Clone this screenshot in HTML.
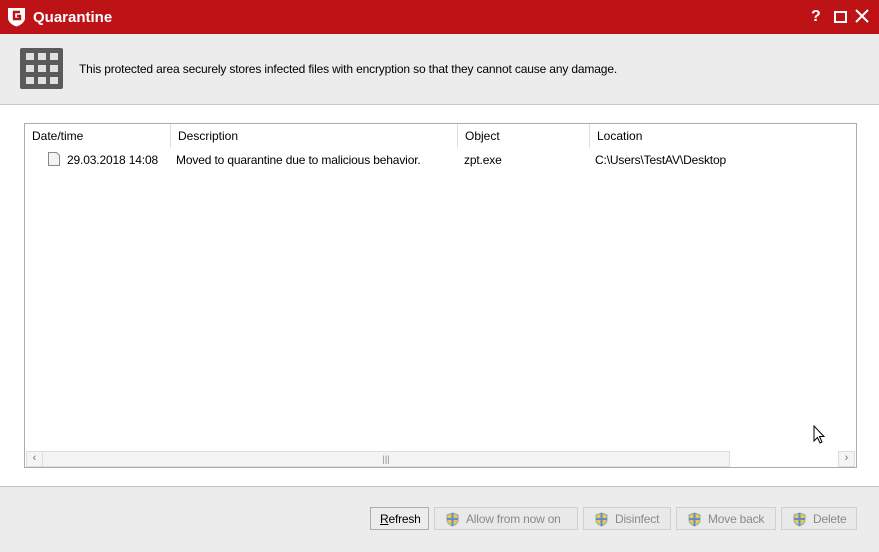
<!DOCTYPE html><html><head><style>
body{margin:0;width:879px;height:551px;position:relative;overflow:hidden;font-family:"Liberation Sans",sans-serif;font-size:12px;color:#000;background:#fff}
.a{position:absolute}
.btn{position:absolute;top:507px;height:23px;border:1px solid #d0d0d0;background:#e9e9e9;color:#8a8a8a;font-size:12px;line-height:23px;box-sizing:border-box;padding-left:31px;letter-spacing:-0.2px}
.btn svg{position:absolute;left:11px;top:4px}
.h{position:absolute;top:0;height:24px;line-height:25px;padding-left:7px;border-right:1px solid #e0e0e0;box-sizing:border-box}
.t{letter-spacing:-0.15px}
</style></head><body>
<div class="a" style="left:0;top:0;width:879px;height:34px;background:#bd1316"></div>
<svg class="a" style="left:7px;top:7px" width="19" height="20" viewBox="0 0 19 20"><path d="M1 1h17v10c0 4-4 7-8.5 8.5C5 18 1 15 1 11z" fill="#fff"/><path d="M13 5H7v7h6V9h-3" fill="none" stroke="#bd1316" stroke-width="2.4"/></svg>
<div class="a" style="left:33px;top:9px;color:#fff;font-weight:bold;font-size:15px">Quarantine</div>
<div class="a" style="left:811px;top:8px;color:#fff;font-weight:bold;font-size:16px">?</div>
<div class="a" style="left:834px;top:11px;width:9px;height:8px;border:2px solid #fff"></div>
<svg class="a" style="left:855px;top:9px" width="14" height="14"><path d="M1 1L13 13M13 1L1 13" stroke="#fff" stroke-width="2"/></svg>
<div class="a" style="left:0;top:34px;width:879px;height:70px;background:#ececec;border-bottom:1px solid #c8c8c8"></div>
<div class="a" style="left:20px;top:48px;width:43px;height:41px;background:#5a5a5a;border-radius:2px"></div>
<svg class="a" style="left:20px;top:48px" width="43" height="41"><g fill="#e0e0e0"><rect x="6" y="5" width="8" height="7"/><rect x="18" y="5" width="8" height="7"/><rect x="30" y="5" width="8" height="7"/><rect x="6" y="17" width="8" height="7"/><rect x="18" y="17" width="8" height="7"/><rect x="30" y="17" width="8" height="7"/><rect x="6" y="29" width="8" height="7"/><rect x="18" y="29" width="8" height="7"/><rect x="30" y="29" width="8" height="7"/></g></svg>
<div class="a t" style="left:79px;top:62px">This protected area securely stores infected files with encryption so that they cannot cause any damage.</div>
<div class="a" style="left:24px;top:123px;width:831px;height:343px;border:1px solid #acacac">
<div class="h" style="left:0;width:146px">Date/time</div>
<div class="h" style="left:146px;width:287px">Description</div>
<div class="h" style="left:433px;width:132px">Object</div>
<div class="h" style="left:565px;width:266px;border:none">Location</div>
<svg class="a" style="left:23px;top:28px" width="12" height="14"><path d="M.5.5h8l3 3v10H.5z" fill="#f4f4f4" stroke="#888"/></svg>
<div class="a t" style="left:42px;top:29px">29.03.2018 14:08</div>
<div class="a t" style="left:151px;top:29px">Moved to quarantine due to malicious behavior.</div>
<div class="a t" style="left:439px;top:29px">zpt.exe</div>
<div class="a t" style="left:570px;top:29px">C:\Users\TestAV\Desktop</div>
<div class="a" style="left:0;top:326px;width:831px;height:17px;background:#fff"></div>
<div class="a" style="left:1px;top:327px;width:15px;height:14px;border:1px solid #ddd;background:#f4f4f4;color:#777;font-size:11px;text-align:center">‹</div>
<div class="a" style="left:17px;top:327px;width:686px;height:14px;border:1px solid #ddd;background:#f4f4f4;color:#888;font-size:9px;text-align:center;line-height:14px">|||</div>
<div class="a" style="left:813px;top:327px;width:15px;height:14px;border:1px solid #ddd;background:#f4f4f4;color:#777;font-size:11px;text-align:center">›</div>
</div>
<svg class="a" style="left:813px;top:425px" width="13" height="20"><path d="M1 1v15l3.5-3.5 2.5 5.5 2-1-2.5-5.5H11z" fill="#fff" stroke="#000"/></svg>
<div class="a" style="left:0;top:486px;width:879px;height:65px;background:#ececec;border-top:1px solid #c4c4c4"></div>
<div class="btn" style="left:370px;width:59px;padding-left:9px;color:#000;border-color:#adadad;background:#ececec"><u>R</u>efresh</div>
<div class="btn" style="left:434px;width:144px"><svg width="13" height="15"><path d="M6.5 1L12 3v5c0 3-3 5-5.5 6C4 13 1 11 1 8V3z" fill="#f1c64a" stroke="#8aa"/><path d="M6.5 1v13M1 7h11" stroke="#5b8fd1" stroke-width="2"/></svg>Allow from now on</div>
<div class="btn" style="left:583px;width:88px"><svg width="13" height="15"><path d="M6.5 1L12 3v5c0 3-3 5-5.5 6C4 13 1 11 1 8V3z" fill="#f1c64a" stroke="#8aa"/><path d="M6.5 1v13M1 7h11" stroke="#5b8fd1" stroke-width="2"/></svg>Disinfect</div>
<div class="btn" style="left:676px;width:100px"><svg width="13" height="15"><path d="M6.5 1L12 3v5c0 3-3 5-5.5 6C4 13 1 11 1 8V3z" fill="#f1c64a" stroke="#8aa"/><path d="M6.5 1v13M1 7h11" stroke="#5b8fd1" stroke-width="2"/></svg>Move back</div>
<div class="btn" style="left:781px;width:76px"><svg width="13" height="15"><path d="M6.5 1L12 3v5c0 3-3 5-5.5 6C4 13 1 11 1 8V3z" fill="#f1c64a" stroke="#8aa"/><path d="M6.5 1v13M1 7h11" stroke="#5b8fd1" stroke-width="2"/></svg>Delete</div>
</body></html>
